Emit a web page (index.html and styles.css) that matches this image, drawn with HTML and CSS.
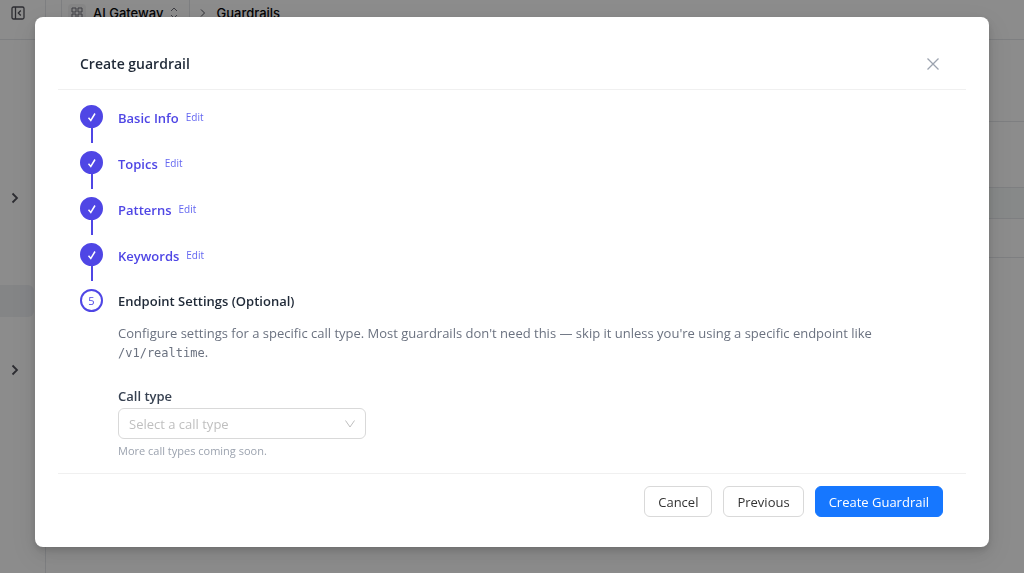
FILE: index.html
```
<!DOCTYPE html>
<html lang="en">
<head>
  <meta charset="UTF-8" />
  <meta name="viewport" content="width=device-width, initial-scale=1.0"/>
  <title>Guardrails</title>
  <link rel="stylesheet" href="styles.css">
</head>
<body>

  <!-- Page behind the dialog -->
  <div class="app">
    <aside class="sidebar">
      <button class="icon-btn sidebar-toggle" aria-label="Collapse sidebar">
        <svg width="14" height="14" viewBox="0 0 14 14"><rect x="1" y="1" width="12" height="12" rx="1.500"/><path d="M4.500 1v12M9.800 4.500 7.300 7l2.500 2.500"/></svg>
      </button>
      <nav class="side-nav">
        <button class="icon-btn nav-group" aria-label="Expand group">
          <svg width="8" height="12" viewBox="0 0 8 12"><path d="M1.500 1.500 6 6l-4.500 4.500"/></svg>
        </button>
        <a class="nav-item" href="#" aria-label="Current page"></a>
        <button class="icon-btn nav-group" aria-label="Expand group">
          <svg width="8" height="12" viewBox="0 0 8 12"><path d="M1.500 1.500 6 6l-4.500 4.500"/></svg>
        </button>
      </nav>
    </aside>
    <main class="main">
      <header class="topbar">
        <button class="switcher">
          <span class="switcher-icon">
            <svg width="12" height="12" viewBox="0 0 12 12"><path d="M1 1h4v4H1zM7 1h4v4H7zM1 7h4v4H1zM7 7h4v4H7z"/></svg>
          </span>
          AI Gateway
          <svg width="8" height="12" viewBox="0 0 8 12"><path d="M1 4l3-3 3 3M1 8l3 3 3-3"/></svg>
        </button>
        <svg class="crumb-arrow" width="6" height="10" viewBox="0 0 6 10"><path d="M1 1.500 4.500 5 1 8.500"/></svg>
        <span class="crumb">Guardrails</span>
      </header>
      <div class="row row-title"></div>
      <div class="row row-tabs"></div>
      <div class="row row-head"></div>
      <div class="row row-data"></div>
    </main>
  </div>

  <!-- Dialog -->
  <div class="mask">
    <div class="modal" role="dialog" aria-modal="true" aria-labelledby="modal-title">
      <header class="modal-header">
        <h1 id="modal-title">Create guardrail</h1>
        <button class="icon-btn close" aria-label="Close">
          <svg width="14" height="14" viewBox="0 0 14 14"><path d="M1.500 1.500l11 11M12.500 1.500l-11 11"/></svg>
        </button>
      </header>

      <div class="steps">
        <section class="step done">
          <div class="rail"><span class="dot"><svg width="10" height="12" viewBox="0 0 10 12"><path d="M1.500 6.800 3.800 9.500 8 2.500"/></svg></span></div>
          <h2>Basic Info</h2>
          <button class="edit">Edit</button>
        </section>
        <section class="step done">
          <div class="rail"><span class="dot"><svg width="10" height="12" viewBox="0 0 10 12"><path d="M1.500 6.800 3.800 9.500 8 2.500"/></svg></span></div>
          <h2>Topics</h2>
          <button class="edit">Edit</button>
        </section>
        <section class="step done">
          <div class="rail"><span class="dot"><svg width="10" height="12" viewBox="0 0 10 12"><path d="M1.500 6.800 3.800 9.500 8 2.500"/></svg></span></div>
          <h2>Patterns</h2>
          <button class="edit">Edit</button>
        </section>
        <section class="step done">
          <div class="rail"><span class="dot"><svg width="10" height="12" viewBox="0 0 10 12"><path d="M1.500 6.800 3.800 9.500 8 2.500"/></svg></span></div>
          <h2>Keywords</h2>
          <button class="edit">Edit</button>
        </section>
        <section class="step current">
          <div class="rail"><span class="dot">5</span></div>
          <div class="step-body">
            <h2>Endpoint Settings (Optional)</h2>
            <p class="description">Configure settings for a specific call type. Most guardrails don't need this — skip it unless you're using a specific endpoint like <code>/v1/realtime</code>.</p>
            <label class="label" for="call-type">Call type</label>
            <div class="select">
              <select id="call-type">
                <option value="" selected>Select a call type</option>
                <option>/v1/realtime</option>
              </select>
              <svg width="12" height="10" viewBox="0 0 12 10"><path d="M1.500 1.500 6 8l4.500-6.500"/></svg>
            </div>
            <p class="hint">More call types coming soon.</p>
          </div>
        </section>
      </div>

      <footer class="modal-footer">
        <button class="btn">Cancel</button>
        <button class="btn">Previous</button>
        <button class="btn primary">Create Guardrail</button>
      </footer>
    </div>
  </div>

</body>
</html>
```
FILE: styles.css
```
* {
  box-sizing: border-box;
}
body {
  margin: 0;
  font-family: "Open Sans", "Noto Sans", sans-serif;
  font-size: 13px;
  line-height: 20px;
  color: #1f2937;
  background: #fff;
}
h1, h2, p {
  margin: 0;
}
button, select {
  font: inherit;
  color: inherit;
}
svg {
  display: block;
  fill: none;
  stroke: currentColor;
}
.icon-btn {
  display: flex;
  padding: 0;
  border: none;
  background: none;
  cursor: pointer;
}

/* Page */
.app {
  display: flex;
  height: 100vh;
  overflow: hidden;
}
.sidebar {
  width: 46px;
  border-right: 1px solid #e5e7eb;
}
.sidebar-toggle {
  width: 100%;
  height: 40px;
  padding: 6px 0 0 11px;
  border-bottom: 1px solid #e5e7eb;
  color: #52525b;
}
.sidebar-toggle svg {
  stroke-width: 1.3;
}
.side-nav {
  padding: 152px 11px 0 0;
}
.nav-group {
  padding-left: 11px;
  color: #52525b;
}
.nav-group svg {
  stroke-width: 1.8;
}
.nav-item {
  display: block;
  height: 32px;
  margin: 81px 0 47px;
  border-radius: 0 6px 6px 0;
  background: #f0f2f5;
}
.main {
  flex: 1;
}
.topbar {
  display: flex;
  align-items: flex-start;
  height: 40px;
  border-bottom: 1px solid #e5e7eb;
  padding-left: 15px;
  font-family: Inter, sans-serif;
  font-weight: 500;
  color: #09090b;
}
.switcher {
  display: flex;
  align-items: center;
  gap: 7px;
  height: 26px;
  padding: 0 11px 0 6px;
  border: 1px solid #e5e7eb;
  border-top: none;
  border-radius: 0 0 6px 6px;
  background: none;
}
.switcher svg {
  color: #71717a;
}
.switcher-icon {
  padding: 3px;
  border-radius: 4px;
  background: #f4f4f5;
}
.crumb-arrow {
  margin: 8px 10px 0;
  color: #52525b;
}
.crumb {
  padding-top: 3px;
}
.row {
  border-bottom: 1px solid #e5e7eb;
}
.row-title { height: 82px; }
.row-tabs { height: 66px; }
.row-head {
  height: 31px;
  background: #f6faf9;
}
.row-data { height: 39px; }

/* Dialog */
.mask {
  position: fixed;
  inset: 0;
  overflow: auto;
  padding: 17px 35px;
  background: rgba(0, 0, 0, 0.45);
}
.modal {
  padding: 0 23px;
  border-radius: 8px;
  background: #fff;
  box-shadow: 0 6px 16px rgba(0, 0, 0, 0.08), 0 3px 6px rgba(0, 0, 0, 0.12), 0 9px 28px 8px rgba(0, 0, 0, 0.05);
}
.modal-header {
  display: flex;
  justify-content: space-between;
  align-items: center;
  height: 73px;
  padding: 21px 26px 0 22px;
  border-bottom: 1px solid #f0f0f0;
}
.modal-header h1 {
  font-size: 14px;
  font-weight: 600;
}
.close {
  color: #9ca3af;
}
.close svg {
  stroke-width: 1.3;
}

/* Steps */
.steps {
  padding: 15px 22px 12px;
}
.step {
  display: flex;
  align-items: flex-start;
}
.done {
  height: 46px;
}
.rail {
  display: flex;
  flex-direction: column;
  align-items: center;
  width: 23px;
  margin-right: 15px;
}
.done .rail::after {
  content: "";
  width: 2px;
  height: 15px;
  background: #4f46e5;
}
.dot {
  display: flex;
  align-items: center;
  justify-content: center;
  width: 23px;
  height: 23px;
  border: 2px solid #4f46e5;
  border-radius: 50%;
  font-size: 11px;
  color: #4f46e5;
}
.dot svg {
  stroke-width: 1.5;
}
.done .dot {
  background: #4f46e5;
  color: #fff;
}
.step h2 {
  padding-top: 2px;
  font-size: 13px;
  font-weight: 600;
}
.done h2 {
  padding-top: 3px;
  color: #4f46e5;
}
.edit {
  margin-left: 7px;
  padding: 2px 0 0;
  border: none;
  background: none;
  font-size: 10px;
  color: #6366f1;
  cursor: pointer;
}
.step-body {
  flex: 1;
}
.description {
  margin-top: 13px;
  line-height: 19px;
  color: #6b7280;
}
.description code {
  font-family: "DejaVu Sans Mono", monospace;
  font-size: 12px;
}
.label {
  display: block;
  margin-top: 23px;
  font-weight: 600;
  color: #374151;
}
.select {
  display: grid;
  align-items: center;
  width: 248px;
  margin-top: 2px;
}
.select select,
.select svg {
  grid-area: 1 / 1;
}
.select select {
  appearance: none;
  width: 100%;
  height: 31px;
  padding: 0 30px 0 10px;
  border: 1px solid #d9d9d9;
  border-radius: 6px;
  background: #fff;
  color: #bfbfbf;
}
.select svg {
  justify-self: end;
  margin-right: 10px;
  color: #bfbfbf;
  pointer-events: none;
}
.hint {
  margin-top: 2px;
  font-size: 11px;
  color: #9ca3af;
}

/* Footer */
.modal-footer {
  display: flex;
  justify-content: flex-end;
  gap: 11px;
  padding: 12px 23px 30px;
  border-top: 1px solid #f0f0f0;
}
.btn {
  height: 31px;
  padding: 0 13px;
  border: 1px solid #d9d9d9;
  border-radius: 6px;
  background: #fff;
  color: #333;
  cursor: pointer;
}
.primary {
  border-color: #1677ff;
  background: #1677ff;
  color: #fff;
}
```
